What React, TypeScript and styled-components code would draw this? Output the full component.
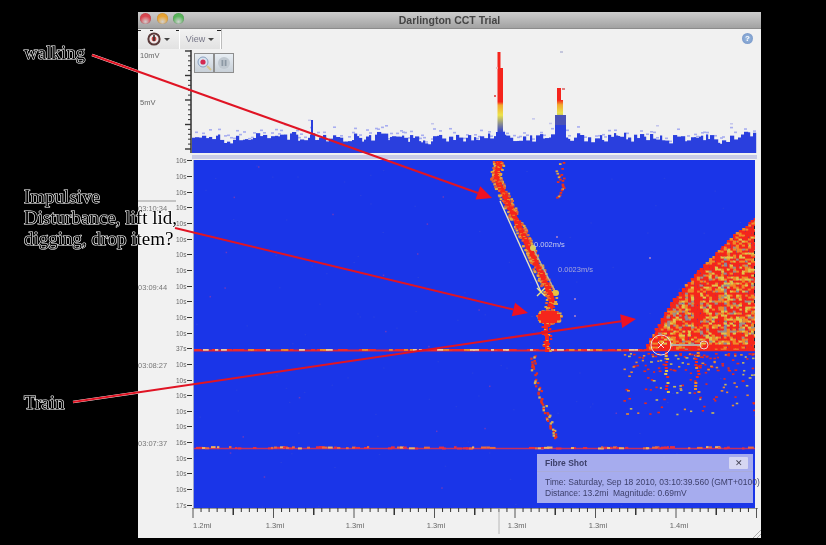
import React from "react";
import styled, { createGlobalStyle } from "styled-components";

const Global = createGlobalStyle`
  html, body { margin: 0; padding: 0; background: #000; }
  body { width: 826px; height: 545px; overflow: hidden; font-family: "Liberation Sans", Arial, sans-serif; }
`;

function rng(seed: number) {
  let a = seed >>> 0;
  return () => {
    a = (a + 0x6d2b79f5) >>> 0;
    let t = a;
    t = Math.imul(t ^ (t >>> 15), t | 1);
    t ^= t + Math.imul(t ^ (t >>> 7), t | 61);
    return ((t ^ (t >>> 14)) >>> 0) / 4294967296;
  };
}

type Cell = { x: number; y: number; w: number; h: number; c: string };
type Pt = [number, number];

function lerpPath(pts: Pt[], x: number): number {
  if (x <= pts[0][0]) return pts[0][1];
  for (let i = 0; i < pts.length - 1; i++) {
    const [x0, y0] = pts[i];
    const [x1, y1] = pts[i + 1];
    if (x >= x0 && x <= x1) return y0 + ((x - x0) / (x1 - x0)) * (y1 - y0);
  }
  return pts[pts.length - 1][1];
}

const FAN_EDGE: Pt[] = [[643, 350], [650, 338], [670, 303], [700, 268], [730, 238], [755, 218]];

function buildHeat(): Cell[] {
  const r = rng(42);
  const out: Cell[] = [];
  const RED = "#f5261c";
  const mix = () => {
    const v = r();
    if (v < 0.52) return RED;
    if (v < 0.76) return "#f08a28";
    if (v < 0.93) return "#e2c64a";
    return "#a09088";
  };
  for (let i = 0; i < 120; i++) {
    out.push({ x: 194 + r() * 561, y: 160 + r() * 348, w: 1.5, h: 1, c: "#2a40e0" });
  }
  for (let i = 0; i < 22; i++) {
    out.push({ x: 200 + r() * 430, y: 165 + r() * 330, w: 1.5, h: 1.5, c: "#6a3ac0" });
  }
  // train fan
  for (let x = 643; x < 755; x += 3) {
    const top = lerpPath(FAN_EDGE, x);
    for (let y = 350; y > top; y -= 2) {
      const edge = y - top < 9 || x < 655 || y > 345;
      const stripe = x > 693 && x < 700;
      const grey = (x > 722 && x < 727) || (x > 684 && x < 688);
      let c = mix();
      if (edge) c = r() < 0.8 ? RED : "#f08a28";
      if (stripe) c = r() < 0.85 ? RED : "#f08a28";
      if (grey && r() < 0.35) c = "#8a8a9c";
      out.push({ x: x + (r() - 0.5), y: y - 2, w: 3.4, h: 2.6, c });
    }
  }
  // scatter below the train's line
  for (let i = 0; i < 170; i++) {
    const x = 622 + r() * 133;
    const y = 353 + Math.pow(r(), 1.9) * 62;
    const v = r();
    out.push({ x, y, w: 2 + r(), h: 1.6, c: v < 0.6 ? "#e8281c" : v < 0.82 ? "#e88a30" : "#c8b85a" });
  }
  for (let y = 352; y < 394; y += 3) {
    if (r() < 0.25) continue;
    out.push({ x: 664 + r() * 3, y, w: 3, h: 2, c: r() < 0.5 ? "#e2c64a" : RED });
    out.push({ x: 694 + r() * 4, y, w: 3, h: 2, c: r() < 0.5 ? "#f08a28" : RED });
  }
  // horizontal lines
  for (let x = 194; x < 645; x += 3) {
    const v = r();
    if (v < 0.6) out.push({ x, y: 349, w: 3 + r() * 4, h: 1.8, c: v < 0.07 ? "#eec8a0" : v < 0.25 ? "#f08a28" : "#f02a28" });
  }
  for (let x = 196; x < 755; x += 3) {
    const v = r();
    if (v < 0.5) out.push({ x, y: 446 + r() * 1.5, w: 2 + r() * 4, h: 2, c: v < 0.08 ? "#f0b060" : v < 0.2 ? "#e86a40" : "#e83040" });
  }
  // walker's track
  const track: Pt[] = [[499, 161], [496, 177], [507, 200], [519, 225], [535, 260], [548, 288], [552, 298], [550, 308]];
  track.slice(0, -1).forEach((p, i) => {
    const q = track[i + 1];
    const n = Math.hypot(q[0] - p[0], q[1] - p[1]) | 0;
    for (let k = 0; k < n; k += 1) {
      const t = k / n;
      const cx = p[0] + (q[0] - p[0]) * t;
      const cy = p[1] + (q[1] - p[1]) * t;
      out.push({ x: cx - 2.5, y: cy, w: 5, h: 2, c: RED });
      for (let j = 0; j < 3; j++) {
        const d = (r() - 0.5) * 11;
        const c = Math.abs(d) > 3 ? (r() < 0.5 ? "#e2a840" : "#e86030") : r() < 0.8 ? RED : "#f08a28";
        out.push({ x: cx + d - 1, y: cy, w: 2.6, h: 2, c });
      }
    }
  });
  // impulse blob and its tail
  for (let i = 0; i < 70; i++) {
    const a = r() * 6.283;
    const m = 0.7 + r() * 0.35;
    out.push({ x: 549 + Math.cos(a) * m * 12 - 1, y: 317 + Math.sin(a) * m * 7 - 1, w: 3, h: 2, c: r() < 0.5 ? "#e2a840" : "#e86030" });
  }
  out.push({ x: 541, y: 311, w: 16, h: 12, c: RED });
  out.push({ x: 538, y: 314, w: 22, h: 6, c: RED });
  for (let y = 322; y < 351; y += 1) {
    const cx = y < 335 ? 546 : 547;
    out.push({ x: cx - 2, y, w: 4, h: 2, c: RED });
    out.push({ x: cx + (r() - 0.5) * 8 - 1, y, w: 2.4, h: 2, c: r() < 0.6 ? RED : "#e2a840" });
  }
  // continuation below
  const tail: Pt[] = [[533, 354], [532, 366], [536, 382], [541, 398], [546, 412], [551, 425], [553, 437]];
  tail.slice(0, -1).forEach((p, i) => {
    const q = tail[i + 1];
    for (let t = 0; t < 1; t += 0.1) {
      if (r() < 0.2) continue;
      out.push({
        x: p[0] + (q[0] - p[0]) * t + (r() - 0.5) * 5,
        y: p[1] + (q[1] - p[1]) * t,
        w: 2.4,
        h: 2.2,
        c: r() < 0.72 ? "#e8301c" : "#d8b050",
      });
    }
  });
  // sparse second track at top
  for (let y = 162; y < 198; y += 1.2) {
    if (r() < 0.35) continue;
    out.push({ x: 559 + (r() - 0.5) * 8, y, w: 2.6, h: 1.8, c: r() < 0.65 ? "#e8301c" : "#e2a840" });
  }
  [[574, 298], [574, 315], [649, 257], [556, 236]].forEach(([x, y]) =>
    out.push({ x, y, w: 2, h: 2, c: "#8a70d0" })
  );
  return out;
}

function buildWave() {
  const r = rng(11);
  const bars: Cell[] = [];
  const dots: Cell[] = [];
  let prev = 14;
  let x = 192;
  while (x < 756) {
    const w = 2 + Math.floor(r() * 3);
    const h = 0.35 * prev + 0.65 * (8 + r() * 15);
    prev = h;
    bars.push({ x, y: 153 - h, w: w + 0.2, h, c: "#2a3fde" });
    if (r() < 0.55) dots.push({ x, y: 153 - h - 2 - r() * 7, w: 3, h: 1.6, c: "#a8aef0" });
    if (r() < 0.05) dots.push({ x, y: 118 + r() * 12, w: 3, h: 1.5, c: "#c4c6ec" });
    x += w;
  }
  return { bars, dots };
}

const HEAT = buildHeat();
const WAVE = buildWave();

const Page = styled.div`
  position: relative;
  width: 826px;
  height: 545px;
  padding: 12px 0 0 138px;
  box-sizing: border-box;
  background: #000;
  overflow: hidden;
`;

const Window = styled.div`
  position: relative;
  width: 623px;
  height: 526px;
  background: #f1f1f1;
  display: flex;
  flex-direction: column;
  filter: blur(0.5px);
`;

const TitleBar = styled.div`
  position: relative;
  height: 17px;
  flex: none;
  background: linear-gradient(#cdcdcd, #a2a2a2);
  border-bottom: 1px solid #8c8c8c;
  box-sizing: border-box;
  display: flex;
  align-items: center;
  justify-content: center;
  font-size: 10.5px;
  font-weight: 700;
  color: #444;
`;

const Lights = styled.div`
  position: absolute;
  left: 2px;
  top: 1px;
  display: flex;
  gap: 5.5px;
`;

const Light = styled.span<{ $c: string }>`
  width: 11px;
  height: 11px;
  border-radius: 50%;
  background: radial-gradient(circle at 50% 80%, #fff6 0, ${(p) => p.$c} 55%);
  box-shadow: inset 0 0 1px #0005;
`;

const Toolbar = styled.div`
  height: 20px;
  flex: none;
  display: flex;
  align-items: stretch;
  justify-content: space-between;
`;

const ToolGroup = styled.div`
  position: relative;
  width: 84px;
  display: flex;
  background: linear-gradient(#f2f2f2, #e2e2e2);
  border-right: 1px solid #bcbcbc;
  box-sizing: border-box;
  &::before {
    content: "";
    position: absolute;
    left: 0;
    right: 0;
    top: 1px;
    height: 1px;
    background: linear-gradient(
      90deg,
      #222 0 3px,
      transparent 3px 12px,
      #222 12px 15px,
      transparent 15px 38px,
      #222 38px 41px,
      transparent 41px 79px,
      #222 79px 83px
    );
  }
`;

const ToolButton = styled.div<{ $w: number }>`
  width: ${(p) => p.$w}px;
  display: flex;
  align-items: center;
  justify-content: center;
  gap: 3px;
  font-size: 9px;
  color: #778;
  border-right: 1px solid #fff;
`;

const Caret = styled.span`
  width: 0;
  height: 0;
  border-left: 3px solid transparent;
  border-right: 3px solid transparent;
  border-top: 3px solid #444;
`;

const Help = styled.div`
  width: 11px;
  height: 11px;
  margin: 4px 8px 0 0;
  border-radius: 50%;
  background: radial-gradient(circle, #9dbce0, #6f8fc4);
  color: #fff;
  font-size: 8px;
  font-weight: 700;
  line-height: 11px;
  text-align: center;
`;

const WaveRow = styled.div`
  height: 104px;
  flex: none;
  display: flex;
`;

const AxisColumn = styled.div`
  position: relative;
  width: 54px;
  flex: none;
  display: flex;
  flex-direction: column;
  padding-top: 2px;
  gap: 37px;
  box-sizing: border-box;
`;

const AxisLabel = styled.div`
  height: 10px;
  line-height: 10px;
  font-size: 7.5px;
  color: #666;
  padding-left: 2px;
`;

const AxisTicks = styled.svg`
  position: absolute;
  right: 0;
  top: 0;
`;

const WavePlot = styled.div`
  position: relative;
  flex: 1;
`;

const PlotSvg = styled.svg`
  display: block;
  flex: none;
`;

const Controls = styled.div`
  position: absolute;
  left: 2px;
  top: 4px;
  display: flex;
`;

const ControlButton = styled.div`
  width: 18px;
  height: 18px;
  border: 1px solid #8e8e8e;
  background: linear-gradient(#e8eef4, #c8d0d8);
  display: flex;
  align-items: center;
  justify-content: center;
`;

const HeatRow = styled.div`
  height: 355px;
  flex: none;
  display: flex;
`;

const TickColumn = styled.div`
  width: 54px;
  flex: none;
  display: grid;
  grid-auto-rows: 15.67px;
`;

const TickRow = styled.div`
  display: flex;
  align-items: center;
  font-size: 6.5px;
  color: #666;
`;

const TimeCell = styled.div<{ $divider: boolean }>`
  width: 38px;
  flex: none;
  align-self: stretch;
  display: flex;
  align-items: center;
  font-size: 7.5px;
  color: #777;
  border-top: ${(p) => (p.$divider ? "2px solid #c4c4c4" : "2px solid transparent")};
  box-sizing: border-box;
`;

const TickCell = styled.div`
  flex: 1;
  display: flex;
  align-items: center;
  justify-content: flex-end;
  gap: 1px;
  &::after {
    content: "";
    width: 5px;
    height: 1px;
    background: #333;
  }
`;

const HeatColumn = styled.div`
  position: relative;
  flex: 1;
  display: flex;
  flex-direction: column;
`;

const Band = styled.div`
  height: 4px;
  width: 565px;
  margin: 2px 0 1px;
  flex: none;
  background: #c9cbe6;
`;

const HeatFrame = styled.div`
  width: 561px;
  height: 348px;
  margin-left: 2px;
  background: #1a35e8;
  box-shadow: -1px 0 0 #9aa4cc;
  flex: none;
  filter: blur(0.45px);
`;

const Popup = styled.div`
  position: absolute;
  left: 345px;
  top: 301px;
  width: 216px;
  height: 49px;
  background: rgba(206, 206, 240, 0.78);
  box-sizing: border-box;
  color: #3c3f6a;
  font-size: 8.5px;
  white-space: nowrap;
`;

const PopupHead = styled.div`
  height: 17px;
  display: flex;
  align-items: center;
  justify-content: space-between;
  padding: 0 5px 0 8px;
  border-bottom: 1px solid #a9abda;
  font-weight: 700;
  font-size: 8.5px;
`;

const PopupClose = styled.div`
  width: 19px;
  height: 12px;
  background: #d6d7f2;
  border-radius: 1px;
  color: #445;
  font-size: 9px;
  font-weight: 400;
  line-height: 12px;
  text-align: center;
`;

const PopupBody = styled.div`
  padding: 5px 0 0 8px;
  line-height: 10.5px;
`;

const Grip = styled.svg`
  position: absolute;
  right: 0;
  bottom: 0;
`;

const Overlay = styled.svg`
  position: absolute;
  left: 0;
  top: 0;
  pointer-events: none;
`;

const Note = styled.div<{ $x: number; $y: number }>`
  position: absolute;
  left: ${(p) => p.$x}px;
  top: ${(p) => p.$y}px;
  font-family: "Liberation Serif", serif;
  font-size: 19px;
  line-height: 21px;
  color: #000;
  -webkit-text-stroke: 1.2px #fff;
  paint-order: stroke fill;
  white-space: nowrap;
  filter: grayscale(1);
`;

function ScaleAxis() {
  const ticks: React.ReactNode[] = [];
  for (let i = 0; i <= 70; i++) {
    const x = i * 8.05;
    const major = i % 10 === 0;
    const mid = i % 5 === 0;
    ticks.push(
      <line key={i} x1={x + 1} x2={x + 1} y1={0} y2={major ? 10 : mid ? 7 : 4} stroke={major ? "#555" : "#333"} strokeWidth={mid && !major ? 1.5 : 1} />
    );
  }
  const labels: [number, string][] = [[1, "1.2mi"], [83, "1.3mi"], [163, "1.3mi"], [244, "1.3mi"], [325, "1.3mi"], [406, "1.3mi"], [487, "1.4mi"]];
  return (
    <PlotSvg width={623} height={30} viewBox="-54 0 623 30">
      <line x1={0} x2={566} y1={0.5} y2={0.5} stroke="#9a9a9a" />
      {ticks}
      <line x1={307} x2={307} y1={0} y2={26} stroke="#b8b8b8" />
      {labels.map(([x, t], i) => (
        <text key={i} x={x} y={20} fontSize={7.5} fill="#666" textAnchor={i === 0 ? "start" : "middle"} fontFamily="Liberation Sans, sans-serif">
          {t}
        </text>
      ))}
    </PlotSvg>
  );
}

function Arrow({ from, to }: { from: Pt; to: Pt }) {
  const a = Math.atan2(to[1] - from[1], to[0] - from[0]);
  const L = 15;
  const W = 7;
  const bx = to[0] - Math.cos(a) * L;
  const by = to[1] - Math.sin(a) * L;
  const nx = -Math.sin(a) * W;
  const ny = Math.cos(a) * W;
  const t = (138 - from[0]) / (to[0] - from[0]);
  const hy = from[1] + (to[1] - from[1]) * t;
  return (
    <g>
      {from[0] < 138 && <line x1={from[0]} y1={from[1]} x2={138} y2={hy} stroke="#fff" strokeWidth={2.6} />}
      <line x1={from[0]} y1={from[1]} x2={bx} y2={by} stroke="#e01424" strokeWidth={2} />
      <polygon points={`${to[0]},${to[1]} ${bx + nx},${by + ny} ${bx - nx},${by - ny}`} fill="#ee1122" />
    </g>
  );
}

const TICKS = Array.from({ length: 23 }, (_, i) => {
  const special: Record<number, string> = { 12: "37s", 18: "16s", 22: "17s" };
  const time: Record<number, string> = { 3: "03:10:34", 8: "03:09:44", 13: "03:08:27", 18: "03:07:37" };
  return { i, label: special[i] ?? "10s", time: time[i] ?? "" };
});

function renderCells(cells: Cell[]) {
  return cells.map((c, i) => <rect key={i} x={c.x} y={c.y} width={c.w} height={c.h} fill={c.c} />);
}

const EDGE_MARKS = [226, 232, 239, 251, 258, 266, 274, 283, 290, 300, 324, 331, 338, 345];

export default function App() {
  return (
    <Page>
      <Global />
      <Window>
        <TitleBar>
          <Lights>
            <Light $c="#d8464f" />
            <Light $c="#e6a232" />
            <Light $c="#58b45a" />
          </Lights>
          Darlington CCT Trial
        </TitleBar>
        <Toolbar>
          <ToolGroup>
            <ToolButton $w={42}>
              <svg width="14" height="14" viewBox="0 0 14 14">
                <circle cx="7" cy="7" r="5.6" fill="#f0e8e8" stroke="#5a3a3a" strokeWidth="2" />
                <circle cx="7" cy="7" r="2.4" fill="#c44" />
                <rect x="6.2" y="3" width="1.6" height="6" fill="#333" />
              </svg>
              <Caret />
            </ToolButton>
            <ToolButton $w={41}>
              View <Caret />
            </ToolButton>
          </ToolGroup>
          <Help>?</Help>
        </Toolbar>
        <WaveRow>
          <AxisColumn>
            <AxisLabel>10mV</AxisLabel>
            <AxisLabel>5mV</AxisLabel>
            <AxisTicks width={8} height={104} viewBox="0 0 8 104">
              <line x1={7} x2={7} y1={1} y2={104} stroke="#222" strokeWidth={1.4} />
              {Array.from({ length: 21 }, (_, i) => (
                <line key={i} x1={i % 5 === 0 ? 1 : 4} x2={7} y1={2 + i * 4.9} y2={2 + i * 4.9} stroke="#333" strokeWidth={i % 5 === 0 ? 1.4 : 1} />
              ))}
            </AxisTicks>
          </AxisColumn>
          <WavePlot>
            <PlotSvg width={569} height={104} viewBox="192 49 569 104">
              {renderCells(WAVE.dots)}
              {renderCells(WAVE.bars)}
              <defs>
                <linearGradient id="sp" gradientUnits="userSpaceOnUse" x1="0" y1="52" x2="0" y2="135">
                  <stop offset="0" stopColor="#f5241c" />
                  <stop offset="0.6" stopColor="#f5241c" />
                  <stop offset="0.64" stopColor="#f2a830" />
                  <stop offset="0.76" stopColor="#ece44a" />
                  <stop offset="0.95" stopColor="#3a48c8" />
                  <stop offset="1" stopColor="#2a3fde" />
                </linearGradient>
                <linearGradient id="sq" gradientUnits="userSpaceOnUse" x1="0" y1="88" x2="0" y2="128">
                  <stop offset="0" stopColor="#f5241c" />
                  <stop offset="0.3" stopColor="#f5241c" />
                  <stop offset="0.42" stopColor="#f2a830" />
                  <stop offset="0.62" stopColor="#e8e04a" />
                  <stop offset="0.82" stopColor="#8a8a90" />
                  <stop offset="1" stopColor="#2a3fde" />
                </linearGradient>
              </defs>
              <rect x={497.5} y={52} width={3} height={90} fill="url(#sp)" />
              <rect x={498} y={68} width={5} height={74} fill="url(#sp)" />
              <rect x={496} y={132} width={9} height={21} fill="#2a3fde" />
              <rect x={557} y={88} width={4} height={40} fill="url(#sq)" />
              <rect x={558} y={100} width={5} height={28} fill="url(#sq)" />
              <rect x={555} y={115} width={11} height={38} fill="#4a52b8" />
              <rect x={555} y={125} width={11} height={28} fill="#2a3fde" />
              <rect x={311} y={120} width={2} height={33} fill="#2a3fde" />
              <rect x={494} y={95} width={2} height={2} fill="#e06060" />
              <rect x={496} y={67} width={2} height={2} fill="#e8c0c0" />
              <rect x={562} y={88} width={3} height={2} fill="#e08080" />
              <rect x={560} y={51} width={3} height={2} fill="#c4c6dc" />
            </PlotSvg>
            <Controls>
              <ControlButton>
                <svg width="16" height="16" viewBox="0 0 16 16">
                  <circle cx="7" cy="7" r="5" fill="#d8e4f0" stroke="#8aa0c0" />
                  <circle cx="7" cy="7" r="2.6" fill="#d42a50" />
                  <line x1="11" y1="11" x2="15" y2="15" stroke="#d8c890" strokeWidth="2" />
                </svg>
              </ControlButton>
              <ControlButton>
                <svg width="14" height="14" viewBox="0 0 14 14">
                  <circle cx="7" cy="7" r="6" fill="#c0c8d0" />
                  <rect x="4.5" y="4" width="1.8" height="6" fill="#8c98a4" />
                  <rect x="7.7" y="4" width="1.8" height="6" fill="#8c98a4" />
                </svg>
              </ControlButton>
            </Controls>
          </WavePlot>
        </WaveRow>
        <HeatRow>
          <TickColumn>
            {TICKS.map((t) => (
              <TickRow key={t.i}>
                <TimeCell $divider={t.i === 3}>{t.time}</TimeCell>
                <TickCell>{t.label}</TickCell>
              </TickRow>
            ))}
          </TickColumn>
          <HeatColumn>
            <Band />
            <HeatFrame>
              <PlotSvg width={561} height={348} viewBox="194 160 561 348">
                <line x1={194} x2={645} y1={350.5} y2={350.5} stroke="#e02434" strokeWidth={1.8} />
                <line x1={194} x2={755} y1={448.5} y2={448.5} stroke="#c8305c" strokeWidth={1.4} />
                {renderCells(HEAT)}
                <line x1={640} x2={755} y1={350.5} y2={350.5} stroke="#f5261c" strokeWidth={1.6} />
                <line x1={500} y1={201} x2={541} y2={292} stroke="#e8e4c0" strokeWidth={1.4} />
                <line x1={533} y1={248} x2={556} y2={293} stroke="#b8b49a" strokeWidth={1.2} />
                <circle cx={533} cy={248} r={3} fill="#d8d060" />
                <circle cx={556} cy={293} r={3} fill="#e8c040" />
                <path d="M537 288 l8 8 M545 288 l-8 8" stroke="#f0e680" strokeWidth={1.4} />
                <text x={534} y={247} fontSize={7.5} fill="#c8ccec" fontFamily="Liberation Sans, sans-serif">0.002m/s</text>
                <text x={558} y={272} fontSize={7.5} fill="#a8a8d8" fontFamily="Liberation Sans, sans-serif">0.0023m/s</text>
                <line x1={671} y1={345} x2={700} y2={345} stroke="#b8a8a0" strokeWidth={2} />
                <circle cx={661} cy={345} r={10} fill="none" stroke="#e8e0e0" strokeWidth={1} />
                <path d="M658 342 l6 6 M664 342 l-6 6" stroke="#f4e8e8" strokeWidth={1} />
                <circle cx={704} cy={345} r={4} fill="none" stroke="#e8d8d0" strokeWidth={1} />
                {EDGE_MARKS.map((y) => (
                  <rect key={y} x={754} y={y} width={1} height={3} fill="#223" />
                ))}
              </PlotSvg>
            </HeatFrame>
            <Popup>
              <PopupHead>
                Fibre Shot
                <PopupClose>✕</PopupClose>
              </PopupHead>
              <PopupBody>
                Time: Saturday, Sep 18 2010, 03:10:39.560 (GMT+0100)
                <br />
                Distance: 13.2mi&nbsp; Magnitude: 0.69mV
              </PopupBody>
            </Popup>
          </HeatColumn>
        </HeatRow>
        <ScaleAxis />
        <Grip width={10} height={10} viewBox="0 0 10 10">
          <path d="M2 10 L10 2 M6 10 L10 6" stroke="#aaa" />
        </Grip>
      </Window>
      <Overlay width={826} height={545} viewBox="0 0 826 545">
        <Arrow from={[92, 55]} to={[492, 198]} />
        <Arrow from={[175, 228]} to={[528, 313]} />
        <Arrow from={[73, 402]} to={[636, 319]} />
      </Overlay>
      <Note $x={24} $y={42}>walking</Note>
      <Note $x={24} $y={186}>
        Impulsive
        <br />
        Disturbance, lift lid,
        <br />
        digging, drop item?
      </Note>
      <Note $x={24} $y={392}>Train</Note>
    </Page>
  );
}
